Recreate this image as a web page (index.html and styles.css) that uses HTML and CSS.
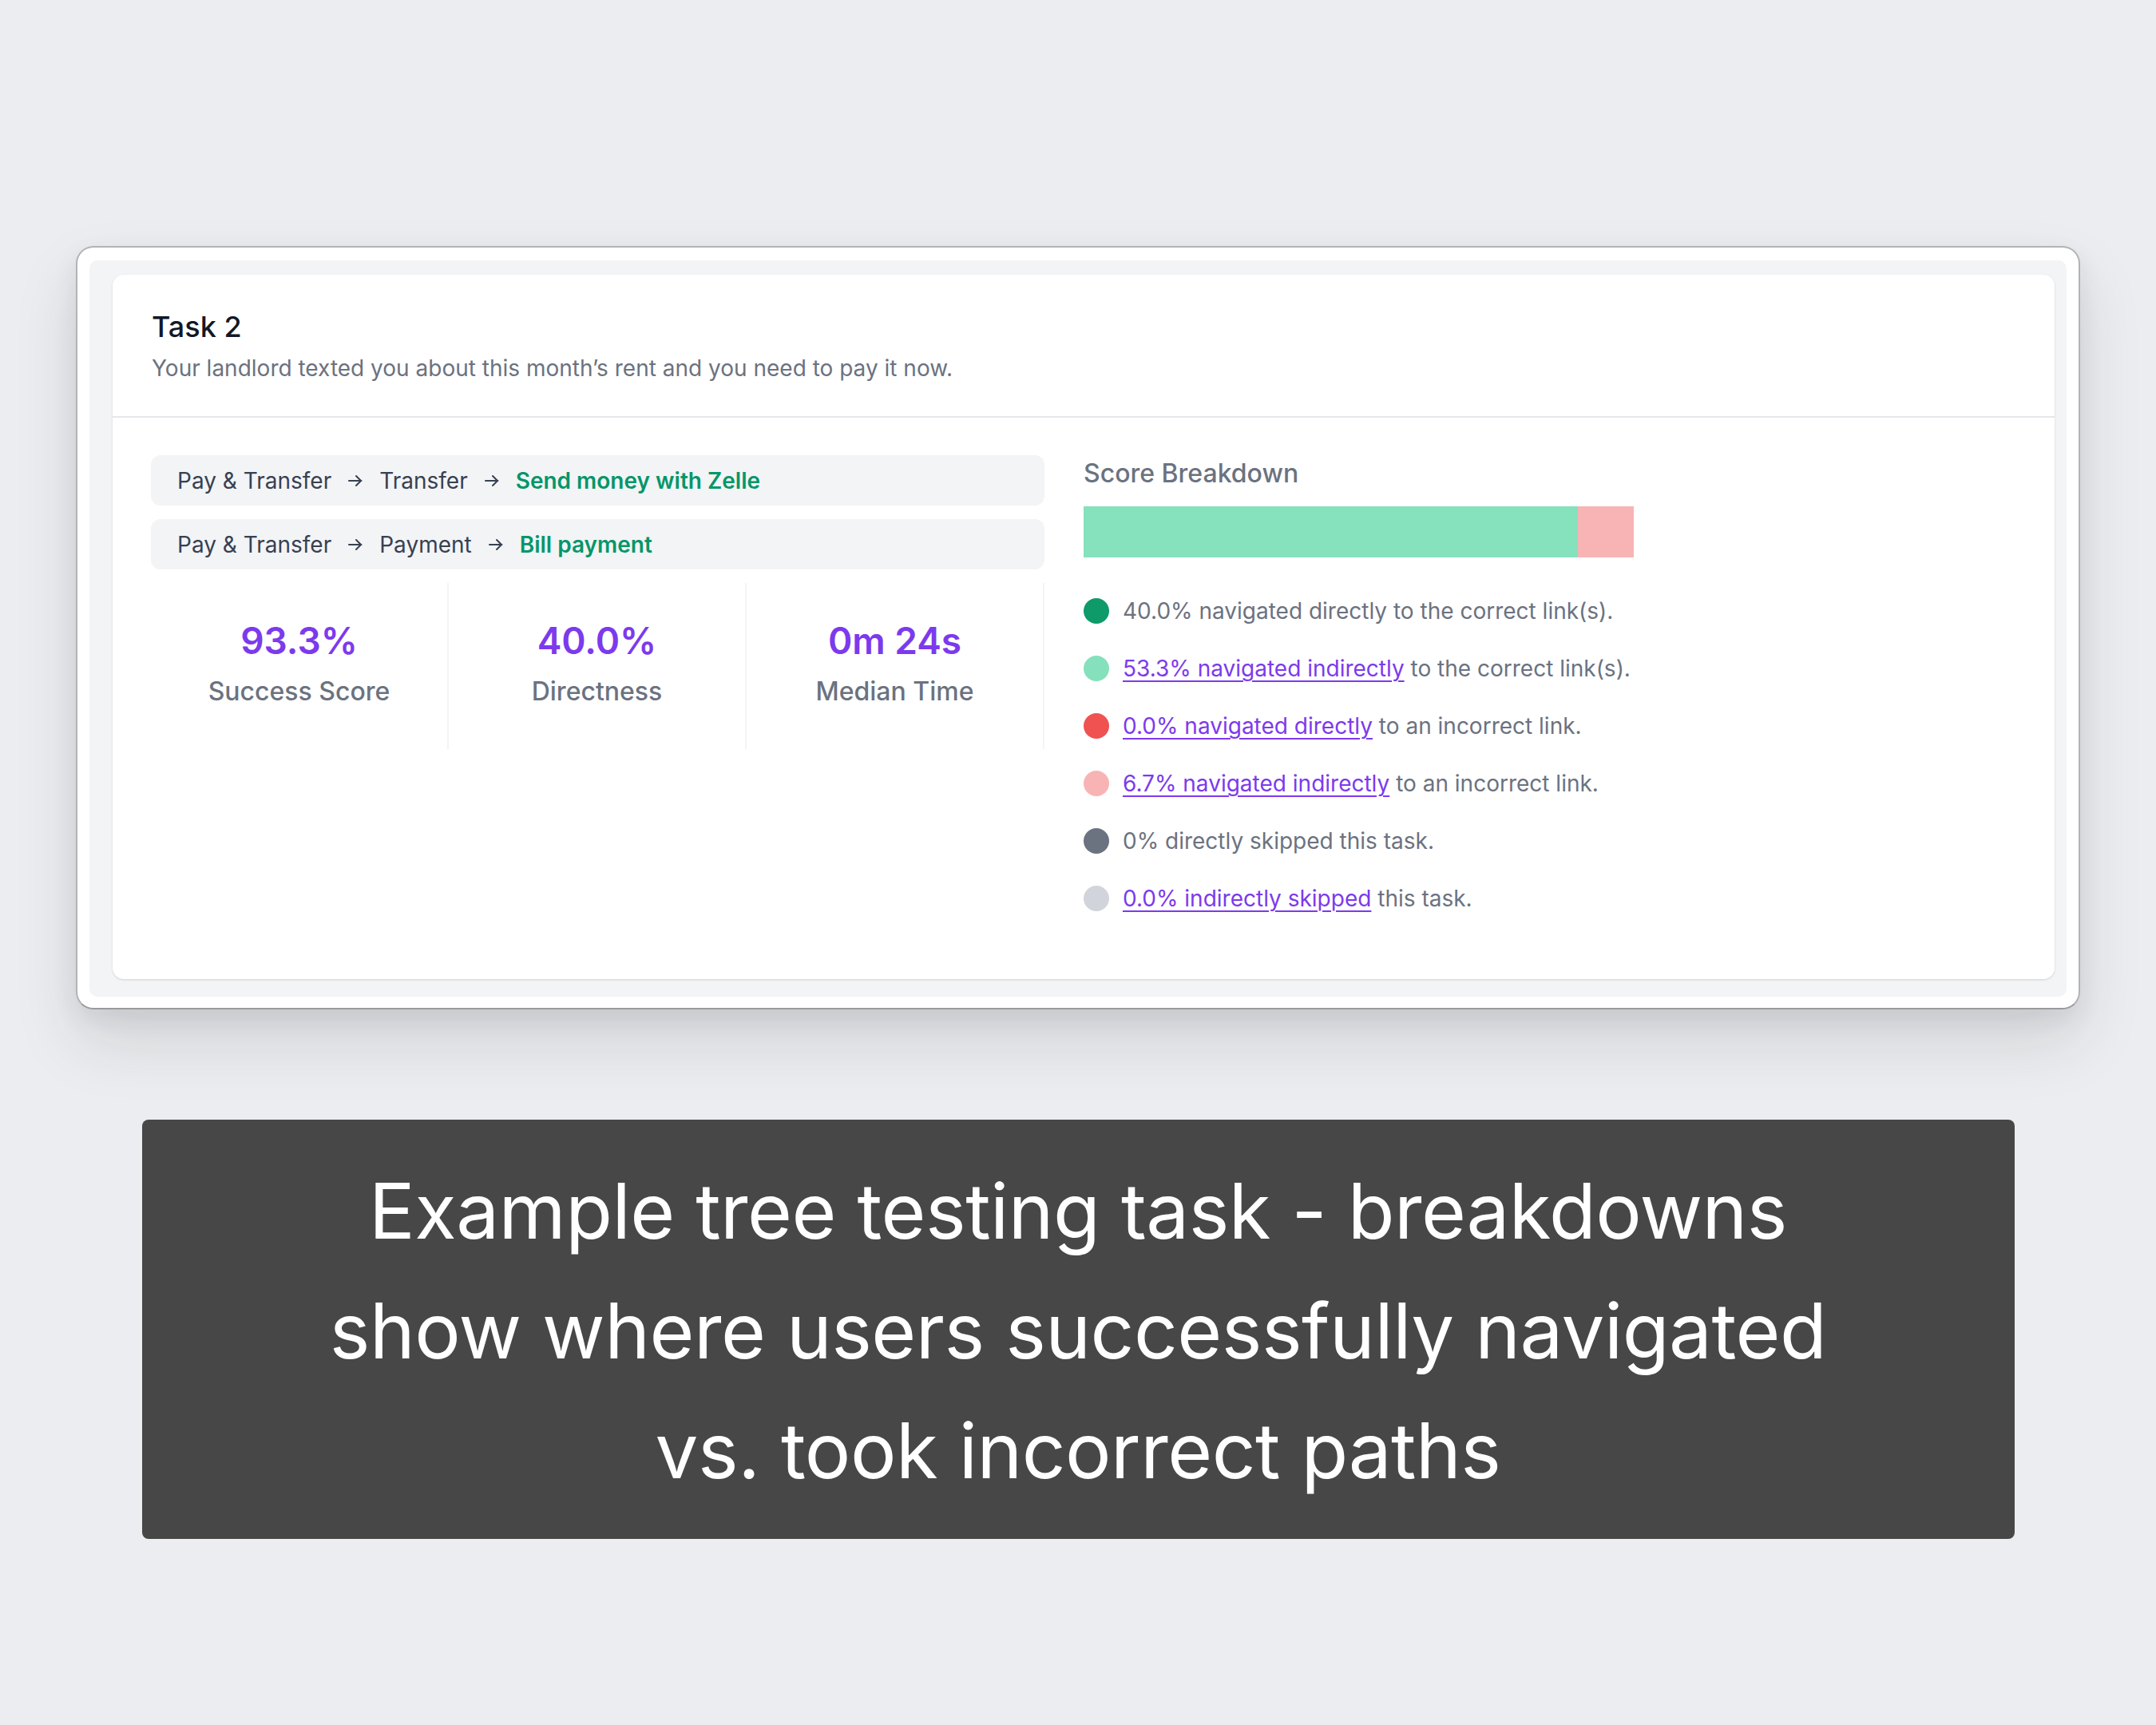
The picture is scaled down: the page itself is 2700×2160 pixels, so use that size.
FILE: index.html
```html
<!DOCTYPE html>
<html lang="en">
<head>
<meta charset="utf-8">
<title>Tree testing task</title>
<link rel="stylesheet" href="styles.css">
</head>
<body>
<main class="page">
  <section class="window">
    <div class="frame">
      <article class="task-card">
        <header class="task-header">
          <h1 class="task-title">Task 2</h1>
          <p class="task-desc">Your landlord texted you about this month’s rent and you need to pay it now.</p>
        </header>
        <div class="task-body">
          <div class="left-col">
            <div class="crumb">
              <span>Pay &amp; Transfer</span>
              <svg class="arrow" viewBox="0 0 20 16"><path d="M2 8h15.5M11 2L17 8 11 14" fill="none" stroke="#374151" stroke-width="2" stroke-linecap="round" stroke-linejoin="round"/></svg>
              <span>Transfer</span>
              <svg class="arrow" viewBox="0 0 20 16"><path d="M2 8h15.5M11 2L17 8 11 14" fill="none" stroke="#374151" stroke-width="2" stroke-linecap="round" stroke-linejoin="round"/></svg>
              <span class="crumb-target">Send money with Zelle</span>
            </div>
            <div class="crumb">
              <span>Pay &amp; Transfer</span>
              <svg class="arrow" viewBox="0 0 20 16"><path d="M2 8h15.5M11 2L17 8 11 14" fill="none" stroke="#374151" stroke-width="2" stroke-linecap="round" stroke-linejoin="round"/></svg>
              <span>Payment</span>
              <svg class="arrow" viewBox="0 0 20 16"><path d="M2 8h15.5M11 2L17 8 11 14" fill="none" stroke="#374151" stroke-width="2" stroke-linecap="round" stroke-linejoin="round"/></svg>
              <span class="crumb-target">Bill payment</span>
            </div>
            <div class="stats">
              <div class="stat">
                <div class="stat-value">93.3%</div>
                <div class="stat-label">Success Score</div>
              </div>
              <div class="stat">
                <div class="stat-value">40.0%</div>
                <div class="stat-label">Directness</div>
              </div>
              <div class="stat">
                <div class="stat-value">0m 24s</div>
                <div class="stat-label">Median Time</div>
              </div>
            </div>
          </div>
          <div class="right-col">
            <h2 class="breakdown-title">Score Breakdown</h2>
            <div class="bar">
              <div class="bar-seg seg-green" style="width:619px"></div>
              <div class="bar-seg seg-pink" style="width:70px"></div>
            </div>
            <ul class="legend">
              <li class="legend-item"><span class="dot dot-dgreen"></span><span>40.0% navigated directly to the correct link(s).</span></li>
              <li class="legend-item"><span class="dot dot-lgreen"></span><span><a class="link" href="#">53.3% navigated indirectly</a> to the correct link(s).</span></li>
              <li class="legend-item"><span class="dot dot-red"></span><span><a class="link" href="#">0.0% navigated directly</a> to an incorrect link.</span></li>
              <li class="legend-item"><span class="dot dot-pink"></span><span><a class="link" href="#">6.7% navigated indirectly</a> to an incorrect link.</span></li>
              <li class="legend-item"><span class="dot dot-dgray"></span><span>0% directly skipped this task.</span></li>
              <li class="legend-item"><span class="dot dot-lgray"></span><span><a class="link" href="#">0.0% indirectly skipped</a> this task.</span></li>
            </ul>
          </div>
        </div>
      </article>
    </div>
  </section>
  <div class="caption">
    <p class="caption-text">Example tree testing task - breakdowns<br>show where users successfully navigated<br>vs. took incorrect paths</p>
  </div>
</main>
</body>
</html>
```

FILE: styles.css
```css
* { box-sizing: border-box; }
html, body { margin: 0; padding: 0; }
body {
  background: #ecedf0;
  font-family: "Inter", "Liberation Sans", sans-serif;
  width: 2700px;
  height: 2160px;
  overflow: hidden;
}
.page {
  display: flex;
  flex-direction: column;
  align-items: center;
  padding-top: 308px;
}
.window {
  width: 2510px;
  background: #ffffff;
  border: 2px solid #b2b3b6;
  border-bottom-color: #9a9a9c;
  border-radius: 22px;
  padding: 16px 15px 14px 15px;
  box-shadow: 0 40px 80px rgba(40, 42, 50, 0.13), 0 12px 30px rgba(40, 42, 50, 0.08);
}
.frame {
  background: #f3f4f6;
  border-radius: 10px;
  padding: 18px 15px 22px 29px;
}
.task-card {
  background: #ffffff;
  border-radius: 14px;
  box-shadow: 0 1px 3px rgba(0, 0, 0, 0.10), 0 1px 2px rgba(0, 0, 0, 0.05);
}
.task-header {
  padding: 40px 49px 41px 49px;
  border-bottom: 2px solid #e5e7eb;
}
.task-title {
  margin: 0;
  font-size: 36px;
  line-height: 50px;
  font-weight: 500;
  color: #111827;
}
.task-desc {
  margin: 8px 0 0 0;
  font-size: 28px;
  line-height: 38px;
  color: #6b7280;
}
.task-body {
  display: grid;
  grid-template-columns: 1119px 1fr;
  column-gap: 49px;
  padding: 47px 49px 81px 48px;
}
.left-col {
  display: flex;
  flex-direction: column;
  gap: 17px;
}
.crumb {
  display: flex;
  align-items: center;
  gap: 20px;
  height: 63px;
  padding: 0 33px;
  background: #f3f4f6;
  border-radius: 12px;
  font-size: 28px;
  color: #374151;
}
.arrow {
  width: 20px;
  height: 16px;
  flex: none;
}
.crumb-target {
  color: #059669;
  font-weight: 600;
}
.stats {
  display: grid;
  grid-template-columns: repeat(3, 1fr);
}
.stat {
  border-right: 2px solid #f3f4f6;
  text-align: center;
  padding: 43px 0 52px 0;
}
.stat-value {
  font-size: 46px;
  line-height: 58px;
  font-weight: 600;
  color: #7c3aed;
}
.stat-label {
  margin-top: 15px;
  font-size: 32px;
  line-height: 40px;
  font-weight: 500;
  color: #6b7280;
}
.right-col {
  display: flex;
  flex-direction: column;
}
.breakdown-title {
  margin: 0;
  font-size: 32px;
  line-height: 46px;
  font-weight: 500;
  color: #6b7280;
}
.bar {
  display: flex;
  margin-top: 18px;
  height: 64px;
}
.bar-seg { height: 100%; }
.seg-green { background: #86e1bd; }
.seg-pink { background: #f8b4b4; }
.legend {
  list-style: none;
  margin: 47px 0 0 0;
  padding: 0;
  display: flex;
  flex-direction: column;
  gap: 32px;
}
.legend-item {
  display: flex;
  align-items: center;
  gap: 17px;
  height: 40px;
  font-size: 28px;
  line-height: 40px;
  color: #6b7280;
}
.dot {
  width: 32px;
  height: 32px;
  border-radius: 50%;
  flex: none;
}
.dot-dgreen { background: #0e9a69; }
.dot-lgreen { background: #84e1bc; }
.dot-red { background: #f05252; }
.dot-pink { background: #f8b4b4; }
.dot-dgray { background: #6b7280; }
.dot-lgray { background: #d1d5db; }
.link {
  color: #7c3aed;
  text-decoration: underline;
  text-decoration-thickness: 2px;
  text-underline-offset: 5px;
}
.caption {
  margin-top: 138px;
  width: 2345px;
  background: #484748;
  border-radius: 8px;
  padding: 39px 40px 36px 40px;
}
.caption-text {
  margin: 0;
  text-align: center;
  color: #ffffff;
  font-size: 96px;
  line-height: 150px;
  font-weight: 400;
  letter-spacing: -0.5px;
}
```
